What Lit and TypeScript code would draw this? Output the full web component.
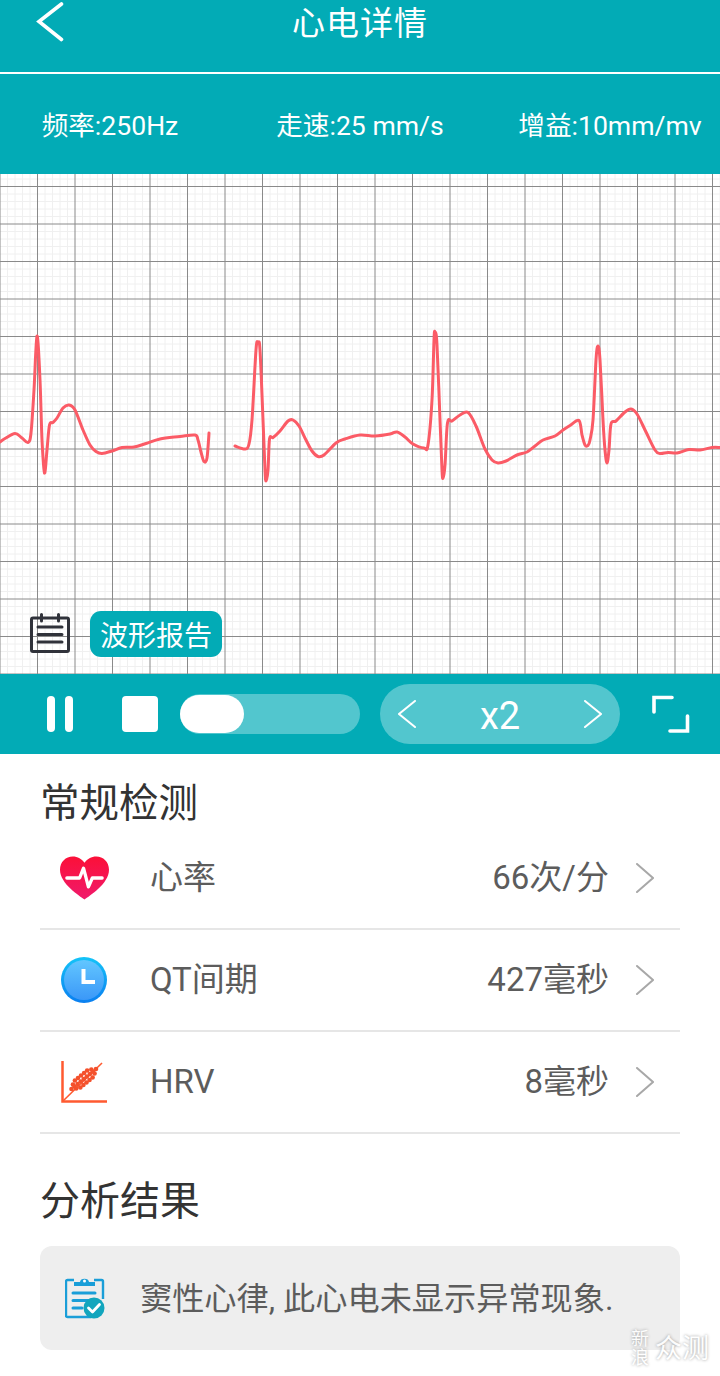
import { css, html, LitElement, svg } from "lit";
import { customElement } from "lit/decorators.js";

type Pt = [number, number];

// traces read off the reference, in page coordinates
const TRACE_A: Pt[] = [
  [0, 442], [5, 438.5], [15, 433.5], [22, 438], [28, 442.5], [31, 433], [34, 390], [37, 336], [40, 380], [42, 440], [44.5, 473],
  [47, 450], [49.5, 425], [53, 422.5], [57, 418], [63, 408], [69, 405], [75, 410], [83, 430], [90, 445], [96, 451.5],
  [102, 453.5], [112, 451], [122, 447.5], [134, 447], [146, 443.5], [160, 439], [180, 436.5], [195, 435], [198, 440],
  [201, 452], [204, 461.5], [207, 458], [209, 433],
];
const TRACE_B: Pt[] = [
  [235, 446], [245, 449], [249, 444], [252, 420], [256, 350], [258, 343], [260, 350], [263, 420], [265, 470], [266, 481],
  [268, 470], [269.5, 439], [273, 437.5], [280, 431], [288, 421], [293, 420], [299, 426], [306, 440], [312, 451], [318, 456.5],
  [324, 455], [336, 443], [345, 439], [360, 435], [375, 436], [390, 434], [397, 432], [405, 437], [413, 444], [424, 448],
  [428, 445], [432, 400], [434, 340], [435, 332], [437, 345], [440, 420], [442, 470], [443, 478], [445, 465], [447.5, 423],
  [452, 421], [460, 415], [468, 412.5], [476, 426], [485, 449], [492, 460], [498, 463], [506, 461], [517, 455], [527, 452],
  [535, 446], [543, 440], [555, 436], [563, 430], [570, 425.5], [579, 420.5], [582, 435], [585, 445], [588, 445.5], [590, 440],
  [593, 420], [596, 360], [598, 346], [600, 360], [603, 420], [605, 450], [607, 463], [609, 450], [611, 424], [616, 421],
  [625, 412], [631, 409], [637, 414], [646, 432], [655, 450], [660, 453.5], [668, 452.5], [677, 453], [689, 449.5], [700, 450],
  [712, 447.5], [720, 447.5],
];

function smooth(pts: Pt[]) {
  let d = `M${pts[0][0]} ${pts[0][1]}`;
  for (let i = 0; i < pts.length - 1; i++) {
    const p0 = pts[Math.max(i - 1, 0)];
    const p1 = pts[i];
    const p2 = pts[i + 1];
    const p3 = pts[Math.min(i + 2, pts.length - 1)];
    const c1x = p1[0] + (p2[0] - p0[0]) / 6;
    const c1y = p1[1] + (p2[1] - p0[1]) / 6;
    const c2x = p2[0] - (p3[0] - p1[0]) / 6;
    const c2y = p2[1] - (p3[1] - p1[1]) / 6;
    d += `C${c1x.toFixed(1)} ${c1y.toFixed(1)} ${c2x.toFixed(1)} ${c2y.toFixed(1)} ${p2[0]} ${p2[1]}`;
  }
  return d;
}

function gridLines() {
  const minor = [];
  const major = [];
  for (let i = 0; i * 7.5 <= 720; i++) {
    const x = i * 7.5;
    (i % 5 === 0 ? major : minor).push(svg`<line x1=${x} y1="174" x2=${x} y2="674" class=${i % 5 === 0 ? "major" : "minor"}></line>`);
  }
  for (let i = 0; 179 + i * 7.5 <= 674; i++) {
    const y = 179 + i * 7.5;
    (i % 5 === 1 ? major : minor).push(svg`<line x1="0" y1=${y} x2="720" y2=${y} class=${i % 5 === 1 ? "major" : "minor"}></line>`);
  }
  return [minor, major];
}

// scatter blob of the HRV icon, three rows along the diagonal
function hrvDots() {
  const out = [];
  for (let i = 0; i <= 8; i++) {
    const t = i / 8;
    const cx = 10.5 + 24.5 * t;
    const cy = 28 - 20 * t;
    const spread = i === 0 || i === 8 ? 0 : i === 1 || i === 7 ? 2.6 : 4.4;
    for (const s of spread ? [-1, 0, 1] : [0]) {
      out.push(svg`<circle cx=${cx + s * spread * 0.62} cy=${cy + s * spread * 0.78} r="2.300" fill="#f4512c"></circle>`);
    }
  }
  return out;
}

@customElement("app-root")
export class AppRoot extends LitElement {
  static styles = css`
    :host {
      display: block;
      width: 720px;
      height: 1376px;
      position: relative;
      overflow: hidden;
      background: #fff;
      font-family: Roboto, "Noto Sans CJK SC", sans-serif;
    }
    .header {
      height: 72px;
      border-bottom: 2px solid #fff;
      background: #02abb6;
      color: #fff;
      display: grid;
      grid-template-columns: 1fr auto 1fr;
      align-items: start;
    }
    .header svg {
      display: block;
      margin: 2px 0 0 36px;
    }
    .title {
      font-size: 33px;
      line-height: 48px;
      letter-spacing: 1px;
    }
    .specs {
      height: 100px;
      padding-bottom: 1px;
      box-sizing: border-box;
      background: #02abb6;
      color: #fff;
      display: grid;
      grid-template-columns: 220px 280px 220px;
      align-items: center;
      justify-items: center;
      font-size: 26.6px;
    }
    .specs span {
      white-space: nowrap;
    }
    .chart {
      height: 500px;
      position: relative;
      background: #fff;
    }
    .chart > svg {
      display: block;
    }
    .minor {
      stroke: #f0f0f0;
      stroke-width: 1;
    }
    .major {
      stroke: #8a8a8a;
      stroke-width: 1;
    }
    .trace {
      fill: none;
      stroke: #fb5b66;
      stroke-width: 3;
      stroke-linejoin: round;
      stroke-linecap: round;
    }
    .report {
      position: absolute;
      left: 29px;
      top: 437px;
      display: flex;
      align-items: center;
      gap: 19px;
    }
    .report svg {
      display: block;
    }
    .report-btn {
      height: 46px;
      width: 132px;
      border-radius: 11px;
      background: #02abb6;
      color: #fff;
      font-size: 28px;
      display: flex;
      align-items: center;
      justify-content: center;
      white-space: nowrap;
    }
    .controls {
      height: 80px;
      background: #02abb6;
      display: flex;
      align-items: center;
      padding-left: 47px;
      box-sizing: border-box;
    }
    .pause {
      display: flex;
      gap: 10px;
    }
    .pause i {
      display: block;
      width: 8px;
      height: 36px;
      border-radius: 4px;
      background: #fff;
    }
    .stop {
      width: 36px;
      height: 36px;
      border-radius: 4px;
      background: #fff;
      margin-left: 49px;
    }
    .slider {
      width: 180px;
      height: 40px;
      border-radius: 20px;
      background: #52c6ce;
      margin-left: 22px;
      display: flex;
      align-items: center;
    }
    .slider i {
      display: block;
      width: 64px;
      height: 38px;
      border-radius: 19px;
      background: #fff;
    }
    .speed {
      width: 240px;
      height: 60px;
      border-radius: 30px;
      background: #52c6ce;
      margin-left: 20px;
      display: grid;
      grid-template-columns: 1fr auto 1fr;
      align-items: center;
      color: #fff;
      font-size: 38px;
      box-sizing: border-box;
      padding: 0 18px;
    }
    .speed span {
      padding-top: 3px;
    }
    .speed svg {
      display: block;
    }
    .speed svg:last-child {
      justify-self: end;
    }
    .full {
      display: block;
      margin-left: 32px;
    }
    .content {
      padding: 0 40px;
    }
    .section-title {
      font-size: 39.5px;
      line-height: 50px;
      color: #333;
      white-space: nowrap;
    }
    .first {
      padding-top: 25px;
      margin-bottom: -1px;
    }
    .second {
      margin: 43px 0 0 0;
      font-size: 40px;
    }
    .row {
      height: 102px;
      box-sizing: border-box;
      border-bottom: 2px solid #e6e6e6;
      display: flex;
      align-items: center;
      font-size: 33px;
      line-height: 40px;
      color: #5c5c5c;
    }
    .row-icon {
      width: 88px;
      margin-right: 22px;
      display: flex;
      justify-content: center;
    }
    .row-icon svg {
      display: block;
    }
    .row-value {
      margin-left: auto;
    }
    .row-arrow {
      margin: 0 26px 0 27px;
    }
    .row-arrow svg {
      display: block;
    }
    .result {
      margin-top: 19px;
      height: 104px;
      border-radius: 12px;
      background: #eee;
      display: flex;
      align-items: center;
      padding-left: 25px;
      box-sizing: border-box;
      font-size: 32.2px;
      color: #5c5c5c;
      white-space: nowrap;
    }
    .result svg {
      display: block;
      margin-right: 35px;
    }
    .result span {
      padding-bottom: 4px;
    }
    .watermark {
      position: absolute;
      left: 631px;
      top: 1329px;
      display: flex;
      align-items: center;
      gap: 6px;
      color: #fff;
      text-shadow: 0 0 3px #8a8a8a;
      opacity: 0.85;
    }
    .watermark .small {
      width: 18px;
      font-size: 18px;
      line-height: 19px;
    }
    .watermark .big {
      font-size: 27px;
      line-height: 30px;
      margin-top: 2px;
      white-space: nowrap;
    }
  `;

  chevron(dir: "left" | "right", w: number, h: number, stroke: string, sw: number) {
    const pts = dir === "left" ? `${w - 1},1 1,${h / 2} ${w - 1},${h - 1}` : `1,1 ${w - 1},${h / 2} 1,${h - 1}`;
    return html`<svg width=${w} height=${h} viewBox="0 0 ${w} ${h}">
      <polyline points=${pts} fill="none" stroke=${stroke} stroke-width=${sw} stroke-linecap="round" stroke-linejoin="miter"></polyline>
    </svg>`;
  }

  rowItem(icon: unknown, label: string, value: string) {
    return html`<div class="row">
      <div class="row-icon">${icon}</div>
      <span class="row-label">${label}</span>
      <span class="row-value">${value}</span>
      <div class="row-arrow">${this.chevron("right", 18, 30, "#a8a8a8", 2)}</div>
    </div>`;
  }

  render() {
    const heart = html`<svg width="49" height="44" viewBox="0 0 50 44">
      <defs>
        <linearGradient id="hg" x1="0" y1="0" x2="0" y2="1">
          <stop offset="0" stop-color="#fb1038"></stop>
          <stop offset="1" stop-color="#f01a6c"></stop>
        </linearGradient>
      </defs>
      <path d="M25 44C20 40 0 28 0 13.500C0 5.500 6 0 13 0C18 0 22.500 2.500 25 6.500C27.500 2.500 32 0 37 0C44 0 50 5.500 50 13.500C50 28 30 40 25 44Z" fill="url(#hg)"></path>
      <polyline points="7,22 20,22 24,12 29,31 33,22 43,22" fill="none" stroke="#fff" stroke-width="3.400" stroke-linecap="round" stroke-linejoin="round"></polyline>
    </svg>`;
    const clock = html`<svg width="46" height="46" viewBox="0 0 46 46">
      <defs>
        <linearGradient id="cg" x1="0" y1="0" x2="0" y2="1">
          <stop offset="0" stop-color="#14c4f8"></stop>
          <stop offset="1" stop-color="#0a7ff0"></stop>
        </linearGradient>
        <linearGradient id="cf" x1="0" y1="0" x2="0" y2="1">
          <stop offset="0" stop-color="#62c6ff"></stop>
          <stop offset="1" stop-color="#3b98f8"></stop>
        </linearGradient>
      </defs>
      <circle cx="23" cy="23" r="23" fill="url(#cg)"></circle>
      <circle cx="23" cy="23" r="20" fill="url(#cf)"></circle>
      <path d="M22.500 12V25H34" fill="none" stroke="#fff" stroke-width="4"></path>
    </svg>`;
    const hrv = html`<svg width="46" height="42" viewBox="0 0 46 42">
      <path d="M1.500 0V40.500H46" fill="none" stroke="#ff5a30" stroke-width="2.500"></path>
      <path d="M2 40L41 2" stroke="#ff5a30" stroke-width="1.600"></path>
      ${hrvDots()}
    </svg>`;
    return html`
      <div class="header">
        <svg width="28" height="40" viewBox="0 0 28 40">
          <polyline points="25.500,2 3,19.500 25.500,37.500" fill="none" stroke="#fff" stroke-width="3.600" stroke-linecap="round"></polyline>
        </svg>
        <div class="title">心电详情</div>
        <div></div>
      </div>
      <div class="specs">
        <span>频率:250Hz</span>
        <span>走速:25 mm/s</span>
        <span>增益:10mm/mv</span>
      </div>
      <div class="chart">
        <svg width="720" height="500" viewBox="0 174 720 500">
          ${gridLines()}
          <path class="trace" d=${smooth(TRACE_A)}></path>
          <path class="trace" d=${smooth(TRACE_B)}></path>
        </svg>
        <div class="report">
          <svg width="42" height="42" viewBox="0 0 42 42">
            <rect x="2.500" y="5" width="37" height="33.500" rx="1.500" fill="none" stroke="#30323a" stroke-width="3"></rect>
            <path d="M12.500 1.500V8M29.500 1.500V8M9 14H33M9 21.500H33M9 29H33" fill="none" stroke="#30323a" stroke-width="3" stroke-linecap="round"></path>
          </svg>
          <div class="report-btn">波形报告</div>
        </div>
      </div>
      <div class="controls">
        <div class="pause"><i></i><i></i></div>
        <div class="stop"></div>
        <div class="slider"><i></i></div>
        <div class="speed">
          ${this.chevron("left", 18, 28, "#fff", 2)}
          <span>x2</span>
          ${this.chevron("right", 18, 28, "#fff", 2)}
        </div>
        <svg class="full" width="38" height="38" viewBox="0 0 38 38">
          <path d="M2 17V2.500H20M35.500 21V36H18" fill="none" stroke="#fff" stroke-width="3.600" stroke-linecap="round"></path>
        </svg>
      </div>
      <div class="content">
        <div class="section-title first">常规检测</div>
        ${this.rowItem(heart, "心率", "66次/分")}
        ${this.rowItem(clock, "QT间期", "427毫秒")}
        ${this.rowItem(hrv, "HRV", "8毫秒")}
        <div class="section-title second">分析结果</div>
        <div class="result">
          <svg width="40" height="42" viewBox="0 0 40 42">
            <path d="M9 3H2.500A1.500 1.500 0 0 0 1 4.500V38.500A1.500 1.500 0 0 0 2.500 40H26M29 3H36.500A1.500 1.500 0 0 1 38 4.500V22" fill="none" stroke="#1a9ed8" stroke-width="2.400"></path>
            <path d="M9 8V4H15C15 -0.500 24 -0.500 24 4H30V8Z" fill="#1a9ed8" transform="translate(0 1)"></path>
            <circle cx="19.500" cy="4" r="1.500" fill="#fff"></circle>
            <path d="M8 16H30M8 23.500H24M8 31H17" stroke="#1a9ed8" stroke-width="3" stroke-linecap="round"></path>
            <circle cx="29" cy="31" r="10.500" fill="#12a5bd"></circle>
            <polyline points="23.500,31 27.500,35 34.500,27.500" fill="none" stroke="#fff" stroke-width="2.800" stroke-linecap="round" stroke-linejoin="round"></polyline>
          </svg>
          <span>窦性心律, 此心电未显示异常现象.</span>
        </div>
      </div>
      <div class="watermark">
        <div class="small">新浪</div>
        <div class="big">众测</div>
      </div>
    `;
  }
}
